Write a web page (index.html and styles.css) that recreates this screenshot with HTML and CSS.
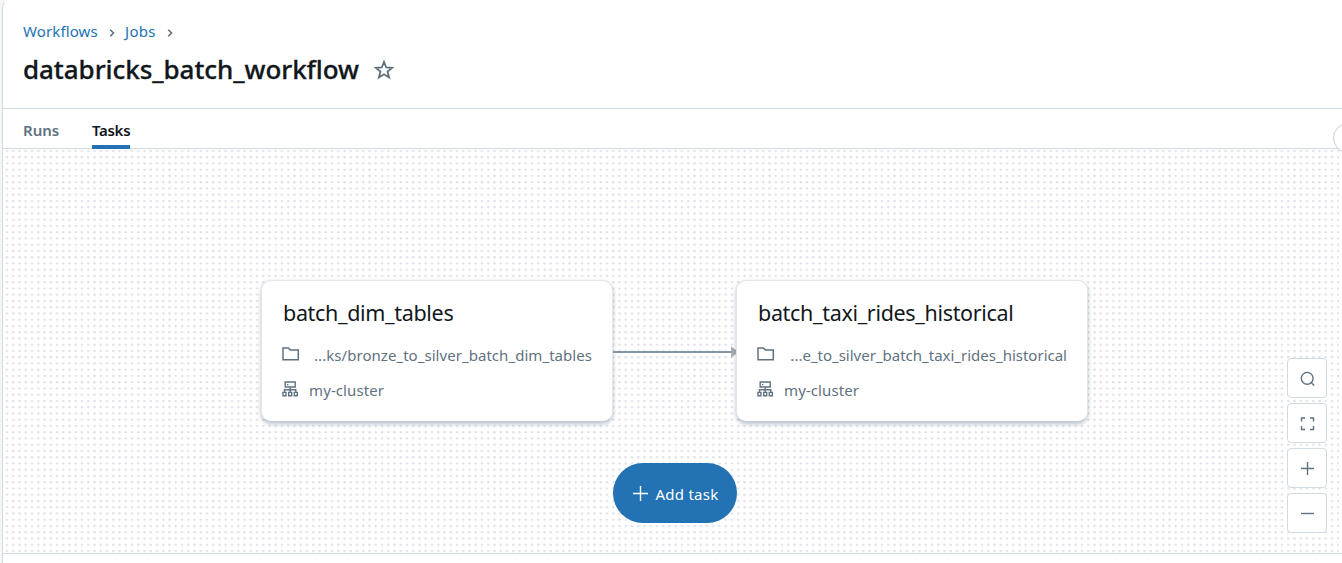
FILE: index.html
```
<!DOCTYPE html>
<html lang="en">
<head>
<meta charset="utf-8">
<title>databricks_batch_workflow</title>
<link rel="stylesheet" href="styles.css">
</head>
<body>
<svg class="defs" aria-hidden="true">
  <symbol id="chevron" viewBox="0 0 6 8"><path d="M1.2 .8 4.5 4 1.2 7.2" fill="none" stroke="currentColor" stroke-width="1.6"/></symbol>
  <symbol id="folder" viewBox="0 0 18 16"><path d="M1 1.9h5.3l2.1 2H16.3v9.8H1z" fill="none" stroke="currentColor" stroke-width="1.5"/></symbol>
  <symbol id="cluster" viewBox="0 0 16 16"><path d="M3.2 1h10v5h-10zM8.2 6v4.8M2.5 11V8.7h11.3V11M1 11.4h3v3.3H1zM6.7 11.4h3v3.3h-3zM12.3 11.4h3v3.3h-3z" fill="none" stroke="currentColor" stroke-width="1.4"/><path d="M5 3h1.4v1.2H5z" fill="currentColor"/></symbol>
</svg>
<main class="page">
  <header class="header">
    <nav class="crumbs">
      <a class="crumb crumb-workflows">Workflows</a><svg class="chevron"><use href="#chevron"/></svg>
      <a class="crumb crumb-jobs">Jobs</a><svg class="chevron"><use href="#chevron"/></svg>
    </nav>
    <div class="title-row">
      <h1 class="title">databricks_batch_workflow</h1>
      <svg class="star" viewBox="0 0 20 20"><path d="M10 1.9l2.2 5.6 6 .3-4.7 3.8 1.6 5.9-5.1-3.3-5.1 3.3 1.6-5.9L1.8 7.8l6-.3z" fill="none" stroke="currentColor" stroke-width="1.8"/></svg>
    </div>
  </header>
  <nav class="tabs">
    <a class="tab tab-runs">Runs</a>
    <a class="tab tab-tasks active">Tasks</a>
  </nav>
  <section class="canvas">
    <article class="node node-dim">
      <h2 class="node-title">batch_dim_tables</h2>
      <div class="node-row"><svg class="folder"><use href="#folder"/></svg><span class="path path-dim">...ks/bronze_to_silver_batch_dim_tables</span></div>
      <div class="node-row cluster-row"><svg class="cluster"><use href="#cluster"/></svg><span class="cluster-name">my-cluster</span></div>
    </article>
    <svg class="edge" viewBox="0 0 126 12"><path d="M0 6h119" stroke="#8396a5" stroke-width="2"/><path d="M118 .5 126 6l-8 5.5z" fill="#a9abb1"/></svg>
    <article class="node node-taxi">
      <h2 class="node-title">batch_taxi_rides_historical</h2>
      <div class="node-row"><svg class="folder"><use href="#folder"/></svg><span class="path">...e_to_silver_batch_taxi_rides_historical</span></div>
      <div class="node-row cluster-row"><svg class="cluster"><use href="#cluster"/></svg><span class="cluster-name">my-cluster</span></div>
    </article>
    <button class="add-task"><svg class="plus" viewBox="0 0 15 15"><path d="M7.5 0v15M0 7.5h15" stroke="currentColor" stroke-width="1.4"/></svg><span>Add task</span></button>
    <div class="controls">
      <button class="control"><svg class="control-icon" viewBox="0 0 16 16"><circle cx="8.2" cy="7.3" r="5.9"/><path d="M12 11.2l3.2 3.2"/></svg></button>
      <button class="control"><svg class="control-icon" viewBox="0 0 16 16"><path d="M2.5 5.5V2H6M11 2h3.5v3.5M14.5 10v3.5H11M6 13.5H2.5V10"/></svg></button>
      <button class="control"><svg class="control-icon" viewBox="0 0 16 16"><path d="M8.5 1v13M2 7.5h13"/></svg></button>
      <button class="control"><svg class="control-icon" viewBox="0 0 16 16"><path d="M2 7.5h13"/></svg></button>
    </div>
  </section>
  <div class="panel-handle"></div>
</main>
</body>
</html>
```
FILE: styles.css
```
* { box-sizing: border-box; }
body {
  margin: 0;
  height: 563px;
  padding-left: 2px;
  overflow: hidden;
  background: #f5f6f7;
  font-family: "Noto Sans", "Open Sans", sans-serif;
  font-size: 15px;
  color: #11171c;
}
.defs { display: none; }
h1, h2 { margin: 0; }
svg { display: block; flex: none; }
button { font: inherit; padding: 0; }
.page {
  position: relative;
  height: 570px;
  margin-right: -10px;
  background: #fff;
  border: 1px solid #d1d9e1;
  border-top-color: transparent;
  border-radius: 8px 0 0 0;
}
.header { height: 108px; padding: 19px 20px 0; border-bottom: 1px solid #d1d9e1; }
.crumbs { display: flex; align-items: center; height: 22px; white-space: nowrap; }
.crumb { color: #2272b4; }
.crumb-workflows { width: 75px; letter-spacing: .12px; }
.crumb-jobs { width: 32px; padding-left: 1px; letter-spacing: .3px; }
.chevron { width: 6px; height: 8px; margin: 3px 9px 0 11px; color: #5f7281; }
.title-row { display: flex; align-items: center; margin-top: 8px; height: 38px; }
.title { width: 336px; font-size: 26px; font-weight: 500; letter-spacing: -.06px; white-space: nowrap; -webkit-text-stroke: .3px currentColor; }
.star { width: 20px; height: 20px; margin: 1px 0 0 15px; color: #5f7281; }
.tabs { display: flex; height: 40px; padding-left: 20px; border-bottom: 1px solid #d1d9e1; font-weight: 600; line-height: 43px; }
.tab { height: 40px; color: #5f7281; white-space: nowrap; }
.tab-runs { width: 36px; margin-right: 33px; }
.tab-tasks { width: 38px; letter-spacing: -.3px; }
.active { color: #11171c; border-bottom: 4px solid #2272b4; }
.canvas {
  position: relative;
  width: 1336px;
  height: 405px;
  background-image: radial-gradient(circle at 4px 2px, #dfe2e9 1px, transparent 1.4px);
  background-size: 6.25px 6.25px;
}
.canvas::after { content: ""; position: absolute; left: 0; bottom: 0; width: 1345px; height: 1px; background: #d1d9e1; }
.node {
  position: absolute;
  top: 131px;
  width: 352px;
  height: 142px;
  padding: 17px 20px 0 20px;
  background: #fff;
  border: 1px solid #e1e6eb;
  border-bottom-color: #c1ccd6;
  border-radius: 10px;
  box-shadow: 0 2px 4px rgba(55, 80, 105, .35);
  white-space: nowrap;
}
.node-dim { left: 258px; }
.node-taxi { left: 733px; }
.node-title { height: 30px; padding-left: 1px; font-size: 21.5px; font-weight: 400; line-height: 29px; letter-spacing: -.33px; }
.node-row { display: flex; align-items: center; justify-content: space-between; height: 24px; margin-top: 15px; color: #5f7281; }
.path-dim { letter-spacing: .05px; }
.folder { width: 18px; height: 16px; margin-top: -3px; }
.cluster-row { justify-content: flex-start; margin-top: 11px; gap: 11px; }
.cluster { width: 16px; height: 16px; margin-top: -3px; }
.cluster-name { letter-spacing: .1px; }
.edge { position: absolute; left: 610px; top: 196.5px; width: 126px; height: 12px; }
.add-task {
  position: absolute;
  left: 610px;
  top: 314px;
  display: flex;
  align-items: center;
  gap: 8px;
  width: 124px;
  height: 60px;
  padding: 2px 0 0 19.5px;
  border: 0;
  border-radius: 30px;
  background: #2272b4;
  color: #fff;
  letter-spacing: .25px;
  white-space: nowrap;
}
.plus { width: 15px; height: 15px; margin-top: -2px; }
.controls { position: absolute; left: 1284px; top: 209px; display: flex; flex-direction: column; gap: 5px; }
.control { display: grid; place-items: center; width: 40px; height: 40px; padding: 1px 0 0; background: #fff; border: 1px solid #d1d9e1; border-radius: 4px; }
.control-icon { width: 16px; height: 16px; fill: none; stroke: #5f7281; stroke-width: 1.4; }
.panel-handle { position: absolute; left: 1330px; top: 122px; width: 30px; height: 30px; border: 1px solid #c5d2dd; border-radius: 50%; background: #fff; }
```
